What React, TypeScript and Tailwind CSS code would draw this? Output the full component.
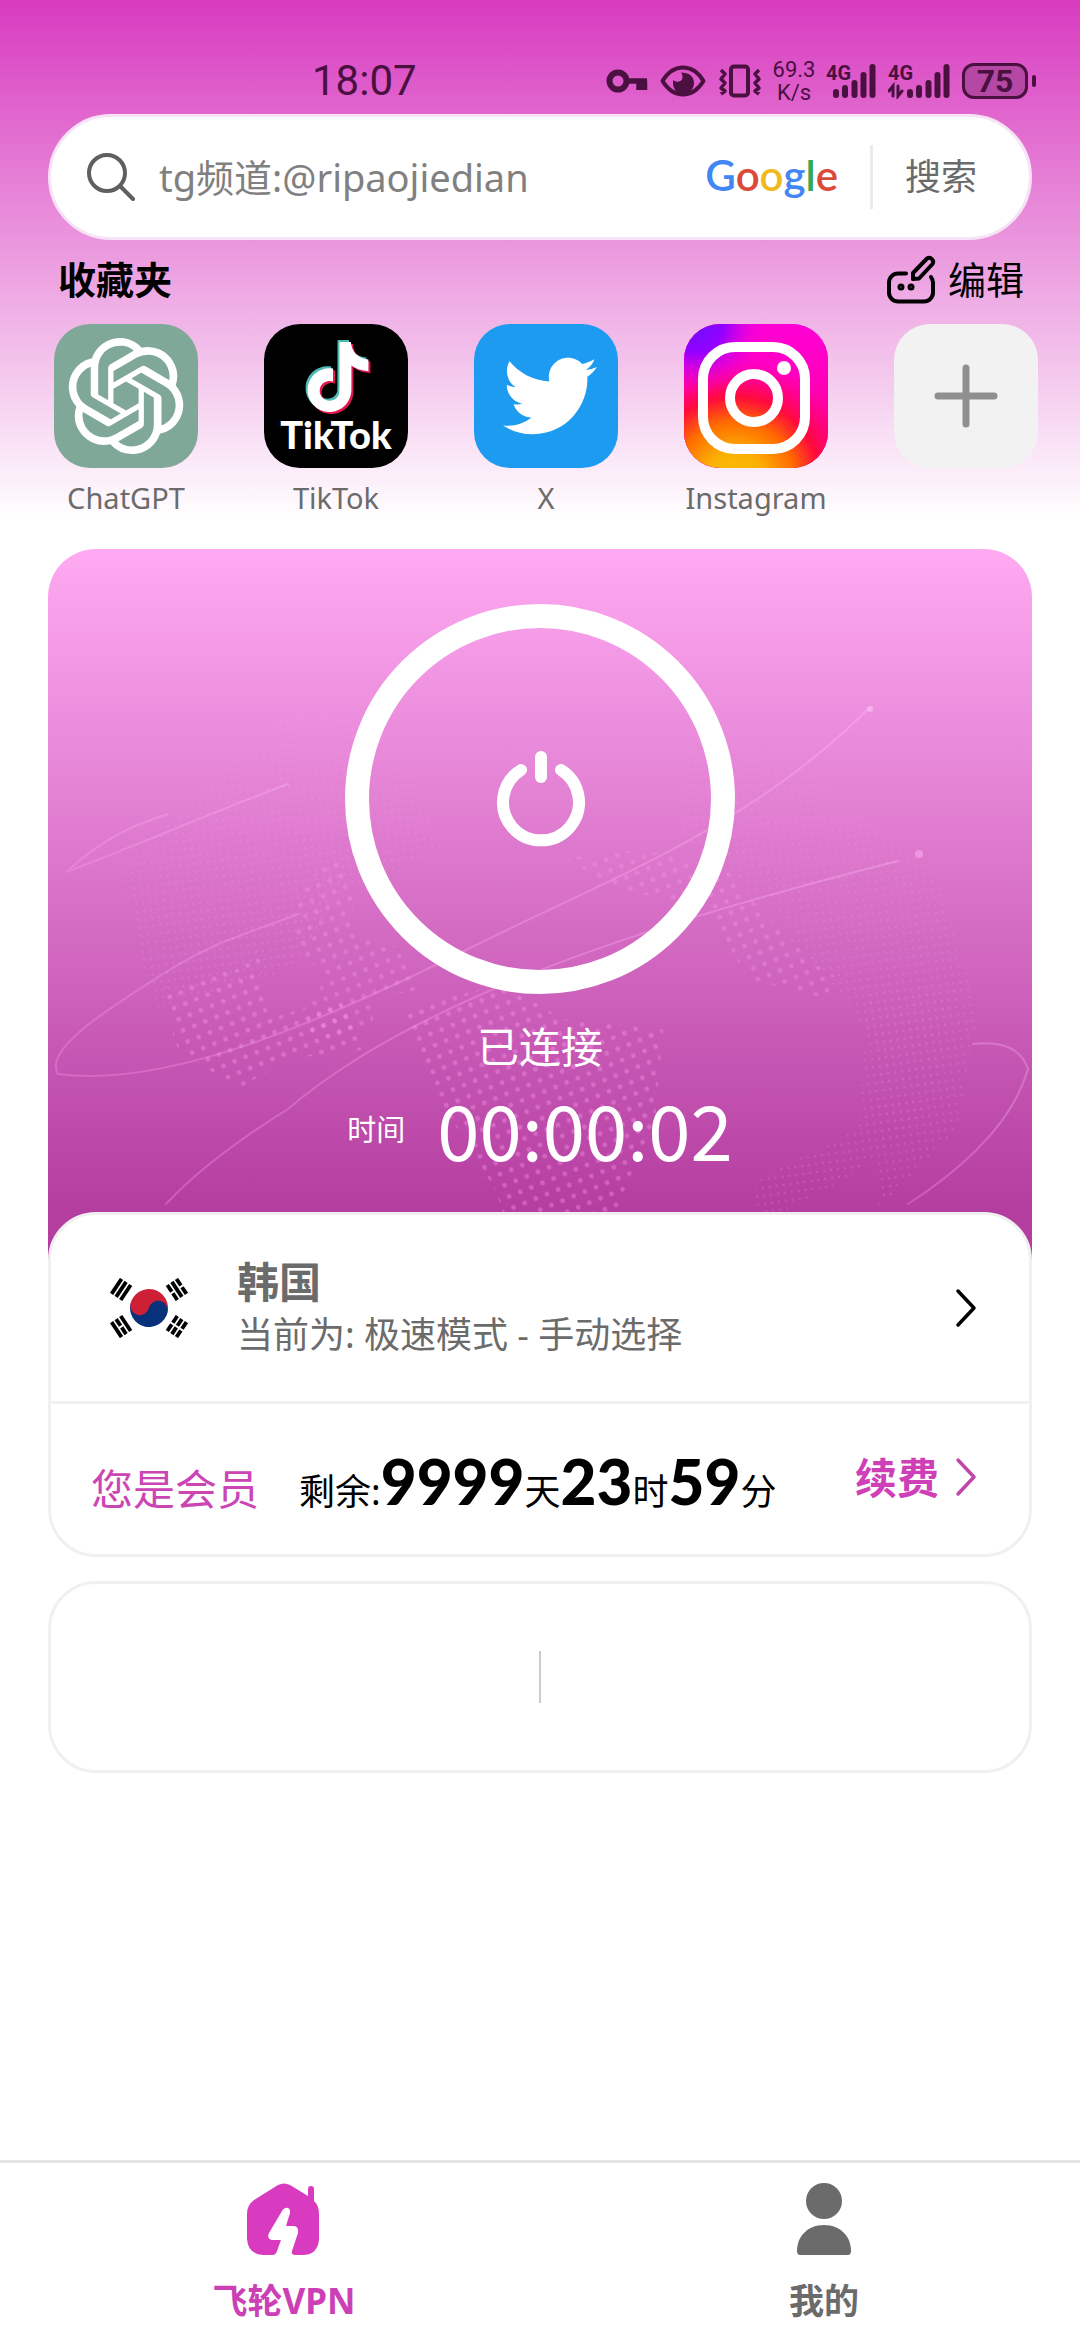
import type { ReactNode } from "react";
import { SiOpenai, SiTiktok } from "react-icons/si";
import { FaTwitter } from "react-icons/fa";

const Signal = ({ data }: { data?: boolean }) => (
  <div className={`relative flex h-9 items-end justify-end ${data ? "w-[62px]" : "w-[50px]"}`}>
    <span className="absolute top-0 left-0 font-['Roboto'] text-[20px] leading-5 font-bold">4G</span>
    <svg className="shrink-0" width="62" height="36" viewBox="0 0 62 36" stroke="currentColor" strokeLinecap="round">
      <path d="M22 29v3M31 25v7M40.500 20v12M49.500 12v20M58.500 4v28" strokeWidth="6" />
      {data && <path d="M5 33V23l-4 5M10 23v10l4-5" fill="none" strokeWidth="3" />}
    </svg>
  </div>
);

const StatusIcons = () => (
  <div className="flex items-center text-[#4a1040]">
    <svg width="42" height="24" viewBox="0 0 42 24" fill="none" stroke="currentColor">
      <circle cx="12" cy="12" r="8.500" strokeWidth="6" />
      <path d="M20 12h21M33 12v9M38.500 12v9" strokeWidth="5.500" />
    </svg>
    <svg className="ml-3" width="46" height="32" viewBox="0 0 46 32" fill="none" stroke="currentColor" strokeWidth="4">
      <path d="M2.500 16C8 7 15 2.500 23 2.500S38 7 43.500 16C38 25 31 29.500 23 29.500S8 25 2.500 16Z" strokeLinejoin="round" />
      <path
        d="M21 7.500c8 0 13 4 13 10.500S29 29 23 29 13 24 13 18c0-1 0-2 .5-3 2.500 3 8.500 2 9-2 .2-2.500-.5-4-1.500-5.500Z"
        fill="currentColor"
        stroke="none"
      />
    </svg>
    <svg className="ml-3" width="44" height="34" viewBox="0 0 44 34" fill="none" stroke="currentColor" strokeWidth="4" strokeLinejoin="round">
      <rect x="13" y="2.500" width="17" height="29" rx="3" />
      <path d="M3 6l4 4-4 5 4 4-4 5 4 3-4 3M41 6l-4 4 4 5-4 4 4 5-4 3 4 3" strokeWidth="3.500" />
    </svg>
    <div className="mx-2 flex w-12 flex-col items-center font-['Roboto'] text-[22px] leading-[23px]">
      <span>69.3</span>
      <span>K/s</span>
    </div>
    <div className="flex gap-3">
      <Signal />
      <Signal data />
    </div>
    <div className="ml-3 flex items-center">
      <div className="flex h-9 w-[66px] items-center justify-center rounded-xl border-3 border-current bg-[#b548a4] font-['Roboto'] text-[32px] leading-none font-bold">
        75
      </div>
      <div className="ml-1 h-3 w-1 rounded-full bg-current" />
    </div>
  </div>
);

const GoogleLogo = () => (
  <span className="pb-1 font-['Lato'] text-[42px] leading-none font-semibold" aria-label="Google">
    <span className="text-[#4285f4]">G</span>
    <span className="text-[#d94a38]">o</span>
    <span className="text-[#efbb1c]">o</span>
    <span className="text-[#4285f4]">g</span>
    <span className="text-[#34a853]">l</span>
    <span className="text-[#d94a38]">e</span>
  </span>
);

const TikTokLogo = () => (
  <span className="flex flex-col items-center">
    <span className="relative block h-[72px] w-[70px]">
      <SiTiktok className="absolute top-0 left-0 text-[#4fb9b5]" size={70} />
      <SiTiktok className="absolute top-1 left-1 text-[#e3174f]" size={70} />
      <SiTiktok className="absolute top-0.5 left-0.5 text-white" size={70} />
    </span>
    <span className="mt-1 font-['Lato'] text-[38px] leading-9 font-black text-white">TikTok</span>
  </span>
);

const InstagramLogo = () => (
  <svg width="144" height="144" viewBox="0 0 144 144">
    <defs>
      <linearGradient id="igBase" x1="0" y1="0" x2="0" y2="1">
        <stop offset="0" stopColor="#ff00d6" />
        <stop offset="0.35" stopColor="#ff00c0" />
        <stop offset="1" stopColor="#ff0070" />
      </linearGradient>
      <radialGradient id="igWarm" cx="0.35" cy="1.100" r="0.85">
        <stop offset="0" stopColor="#fcc000" />
        <stop offset="0.25" stopColor="#fbb005" />
        <stop offset="0.5" stopColor="#ff6a00" />
        <stop offset="0.7" stopColor="#ff0a3c" />
        <stop offset="1" stopColor="#ff0080" stopOpacity="0" />
      </radialGradient>
      <radialGradient id="igCool" cx="0.08" cy="0" r="0.5">
        <stop offset="0" stopColor="#6a10ff" />
        <stop offset="0.4" stopColor="#9500ff" />
        <stop offset="1" stopColor="#ff00d6" stopOpacity="0" />
      </radialGradient>
    </defs>
    <rect width="144" height="144" fill="url(#igBase)" />
    <rect width="144" height="144" fill="url(#igWarm)" />
    <rect width="144" height="144" fill="url(#igCool)" />
    <g fill="none" stroke="#fff" strokeWidth="10">
      <rect x="19" y="23" width="102" height="102" rx="32" />
      <circle cx="70" cy="74" r="24" />
    </g>
    <circle cx="100" cy="44" r="7" fill="#fff" />
  </svg>
);

const PlusIcon = () => (
  <svg width="64" height="64" viewBox="0 0 64 64" stroke="#8f8f8f" strokeWidth="7" strokeLinecap="round">
    <path d="M32 4v56M4 32h56" />
  </svg>
);

const Chevron = ({ color }: { color: string }) => (
  <svg width="22" height="40" viewBox="0 0 22 40" fill="none" stroke={color} strokeWidth="3.500" strokeLinecap="round" strokeLinejoin="round">
    <path d="M3 3l16 17L3 37" />
  </svg>
);

const KoreaFlag = () => (
  <svg width="80" height="60" viewBox="0 0 80 60">
    <g transform="translate(40 30)">
      <g transform="rotate(14)">
        <path d="M-19 0a19 19 0 0 1 38 0Z" fill="#cd1f36" />
        <path d="M-19 0a19 19 0 0 0 38 0Z" fill="#07317b" />
        <circle cx="-9.500" r="9.500" fill="#cd1f36" />
        <circle cx="9.500" r="9.500" fill="#07317b" />
      </g>
      <g stroke="#000" strokeWidth="3.800">
        <g transform="rotate(33.700)">
          <path d="M-39 -9v18M-33.500 -9v18M-28 -9v18" />
          <path d="M39 -9v8M39 1v8M33.500 -9v8M33.500 1v8M28 -9v8M28 1v8" />
        </g>
        <g transform="rotate(-33.700)">
          <path d="M-39 -9v18M-33.500 -9v8M-33.500 1v8M-28 -9v18" />
          <path d="M39 -9v8M39 1v8M33.500 -9v18M28 -9v8M28 1v8" />
        </g>
      </g>
    </g>
  </svg>
);

const EditIcon = () => (
  <svg width="50" height="50" viewBox="0 0 50 50" fill="none" stroke="#000" strokeWidth="4" strokeLinecap="round" strokeLinejoin="round">
    <path d="M20 19.500h-8a9 9 0 0 0-9 9v10a9 9 0 0 0 9 9h26a9 9 0 0 0 9-9v-10c0-2-1-4-2-5.500" />
    <path d="M27 25v-6L41 4.500a4 4 0 0 1 5.500 5.500L33 24.500Z" />
    <circle cx="15" cy="33" r="1.500" />
    <circle cx="25" cy="33" r="1.500" />
  </svg>
);

const HomeIcon = () => (
  <svg width="74" height="72" viewBox="0 0 74 72">
    <path
      d="M31 2Q37-1 43 2l18 11V6a3 3 0 0 1 6 0v12q5 4 5 13v25q-1 15-15 16H47q-3-1-2-4l6-18q1-7-5-7h-7l4-13c1-6-5-7-8-2L22 50c-2 4 0 7 4 7h8l-4 11q-1 4-5 4h-9Q1 71 0 56V31q0-9 7-14Z"
      fill="#d83bc0"
    />
  </svg>
);

const PersonIcon = () => (
  <svg width="56" height="72" viewBox="0 0 56 72" fill="#6b6b6b">
    <circle cx="28" cy="18" r="18" />
    <path d="M28 42c16 0 27 11 27 26 0 2-1 4-3 4H4c-2 0-3-2-3-4 0-15 11-26 27-26Z" />
  </svg>
);

const WorldMap = () => (
  <svg className="absolute inset-0 h-full w-full" viewBox="0 0 984 711" preserveAspectRatio="xMidYMin slice" fill="none">
    <defs>
      <pattern id="dots" width="12" height="12" patternUnits="userSpaceOnUse" patternTransform="rotate(-22)">
        <circle cx="5" cy="5" r="2.400" fill="#ff9df0" />
      </pattern>
      <pattern id="fineDots" width="7" height="8" patternUnits="userSpaceOnUse" patternTransform="rotate(-8)">
        <circle cx="3" cy="4" r="1.200" fill="#ff9df0" />
      </pattern>
      <linearGradient id="trail" x1="0" y1="1" x2="1" y2="0">
        <stop offset="0" stopColor="#ff9df0" stopOpacity="0.3" />
        <stop offset="1" stopColor="#ffc4f6" stopOpacity="0.3" />
      </linearGradient>
    </defs>
    <g fill="url(#dots)">
      <path opacity="0.3" d="M250 340l40-35 15 40 0 40 50 15 20 40-50 10 0 30-60 10-10-40 30-20-40-30Z" />
      <path opacity="0.35" d="M110 440l80-20 20-20 10 70 70-20 30 50-80 10-50 30-60-40Z" />
      <path opacity="0.35" d="M355 460l100-25 60 35 100 10-8 90-30 70-20 50-90 10-20-60-50-80Z" />
      <path opacity="0.3" d="M500 300l40 10 50-10 90 20 40 50 70 60-10 20-80-20-40-70-90-20Z" />
    </g>
    <g fill="url(#fineDots)" opacity="0.2">
      <path d="M75 320l110-110 60-50 60 10 60 60 30 70-100 40-50 80-140 40Z" />
      <path d="M640 200l120 20 130 110 40 130-20 120-80 80 0-160-110-150-90-60Z" />
      <path d="M820 440l90 0-30 120-80 70-100 50 10-50 100-50Z" />
    </g>
    <g stroke="url(#trail)" strokeWidth="2" strokeLinecap="round">
      <path d="M18 323C80 300 160 265 240 235M18 323C60 285 90 275 120 265" />
      <path d="M820 160C700 280 560 330 420 400S120 540 10 525C-5 500 60 460 115 425S200 385 250 365" />
      <path d="M850 312C640 365 380 440 240 560Q160 610 118 655" />
      <path d="M925 495q45-5 55 25Q960 590 860 655" />
    </g>
    <circle cx="822" cy="160" r="3" fill="#ffd0f8" opacity="0.5" />
    <circle cx="871" cy="305" r="4" fill="#ffb5f3" opacity="0.5" />
  </svg>
);

type Shortcut = { name: string; bg: string; icon: ReactNode };

const shortcuts: Shortcut[] = [
  { name: "ChatGPT", bg: "bg-[#80a899]", icon: <SiOpenai size={116} color="#fff" /> },
  { name: "TikTok", bg: "bg-black", icon: <TikTokLogo /> },
  { name: "X", bg: "bg-[#1d9bf0] pl-2", icon: <FaTwitter size={94} color="#fff" /> },
  { name: "Instagram", bg: "bg-[#ff00c0]", icon: <InstagramLogo /> },
];

const remaining = [
  { value: "9999", unit: "天" },
  { value: "23", unit: "时" },
  { value: "59", unit: "分" },
];

const App = () => {
  return (
    <div className="flex min-h-screen flex-col bg-white bg-[linear-gradient(#d83bc0,#fff_520px)] font-['Noto_Sans','Noto_Sans_CJK_SC',sans-serif] text-black">
      <header className="flex h-[114px] items-center justify-between pt-12 pr-11 pl-[312px]">
        <span className="font-['Roboto'] text-[42px] leading-none text-[#4a1040]">18:07</span>
        <StatusIcons />
      </header>

      <main className="flex flex-1 flex-col">
        <form className="mx-12 flex h-[126px] items-center rounded-full border-3 border-[#f6e3f6] bg-white pl-8" onSubmit={(e) => e.preventDefault()}>
          <svg width="52" height="52" viewBox="0 0 52 52" fill="none" stroke="#5f5f5f" strokeWidth="4" strokeLinecap="round">
            <circle cx="24" cy="22" r="18" />
            <path d="M37 35l13 13" />
          </svg>
          <input
            type="text"
            aria-label="tg频道:@ripaojiedian"
            placeholder="tg频道:@ripaojiedian"
            className="ml-6 min-w-0 flex-1 bg-transparent text-[38px] outline-none placeholder:text-[#808080]"
          />
          <GoogleLogo />
          <div className="ml-8 h-16 w-[3px] bg-[#ebebeb]" />
          <button type="submit" className="pr-[52px] pl-8 text-[36px] text-[#6b6b6b]">
            搜索
          </button>
        </form>

        <div className="mb-1.5 flex h-[78px] items-center justify-between pr-14 pl-[58px]">
          <h2 className="text-[38px] font-bold">收藏夹</h2>
          <button className="flex items-center gap-3 text-[38px]">
            <EditIcon />
            编辑
          </button>
        </div>

        <div className="flex h-[225px] items-start justify-between pr-[42px] pl-[54px]">
          {shortcuts.map((item) => (
            <a key={item.name} href="#" className="flex w-36 flex-col items-center">
              <span className={`flex h-36 w-36 items-center justify-center overflow-hidden rounded-[36px] ${item.bg}`}>{item.icon}</span>
              <span className="mt-2 text-[29px] leading-[44px] text-[#6b6b6b]">{item.name}</span>
            </a>
          ))}
          <button aria-label="添加" className="flex h-36 w-36 items-center justify-center rounded-[36px] bg-[#f2f2f2]">
            <PlusIcon />
          </button>
        </div>

        <section className="relative mx-12 flex flex-col items-center overflow-hidden rounded-t-[48px] bg-[linear-gradient(#ffaaf2,#b43da0_663px)] pt-[55px] pb-20 text-white">
          <WorldMap />
          <button aria-label="已连接" className="relative flex h-[390px] w-[390px] items-center justify-center rounded-full border-24 border-white">
            <svg width="90" height="96" viewBox="0 0 90 96" fill="none" stroke="#fff" strokeWidth="12" strokeLinecap="round">
              <path d="M46 6v20" />
              <path d="M26 19a38 38 0 1 0 40 0" />
            </svg>
          </button>
          <p className="relative mt-6 text-[42px] leading-[58px]">已连接</p>
          <div className="relative flex items-center gap-8">
            <span className="pt-1 text-[29px]">时间</span>
            <span className="font-['Noto_Sans_CJK_SC',sans-serif] text-[76px] leading-[104px]">00:00:02</span>
          </div>
        </section>

        <section className="relative mx-12 -mt-12 rounded-[48px] border-3 border-[#f0f0f0] bg-white">
          <button className="flex h-[186px] w-full items-center pr-[52px] pl-[58px] text-left">
            <KoreaFlag />
            <span className="ml-12 flex flex-1 flex-col text-[#6b6b6b]">
              <span className="text-[42px] leading-[54px] font-bold">韩国</span>
              <span className="text-[36px] leading-[52px]">当前为: 极速模式 - 手动选择</span>
            </span>
            <Chevron color="#000" />
          </button>
          <div className="flex h-[153px] items-center border-t-3 border-[#f0f0f0] pr-[52px] pl-10">
            <div className="flex flex-1 items-baseline gap-10 pt-1">
              <span className="text-[42px] text-[#cc45b4]">您是会员</span>
              <p className="flex items-baseline text-[36px]">
                剩余:
                {remaining.map((part) => (
                  <span key={part.unit}>
                    <b className="font-['Lato'] text-[62px] font-black">{part.value}</b>
                    {part.unit}
                  </span>
                ))}
              </p>
            </div>
            <button className="flex items-center gap-4 pb-1 text-[42px] font-bold text-[#cf3fb8]">
              续费
              <Chevron color="#c046aa" />
            </button>
          </div>
        </section>

        <section className="mx-12 mt-6 flex h-48 items-center justify-center rounded-[48px] border-3 border-[#f0f0f0] bg-white">
          <div className="h-[52px] w-0.5 bg-[#ccc]" />
        </section>
      </main>

      <nav className="grid h-[180px] grid-cols-2 border-t-3 border-[#e5e5e5] bg-white text-[35px] font-bold">
        <button className="flex flex-col items-center pt-5 pl-7 text-[#cc40b5]">
          <HomeIcon />
          <span className="mt-5 leading-[52px]">飞轮VPN</span>
        </button>
        <button className="flex flex-col items-center pt-5 pl-7 text-[#6b6b6b]">
          <PersonIcon />
          <span className="mt-5 leading-[52px]">我的</span>
        </button>
      </nav>
    </div>
  );
};

export default App;
